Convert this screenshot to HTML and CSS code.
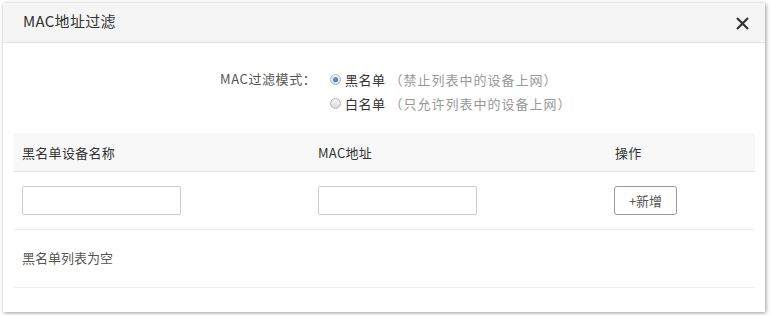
FILE: index.html
```html
<!DOCTYPE html>
<html>
<head>
  <meta charset="UTF-8" />
  <meta name="viewport" content="width=device-width, initial-scale=1.0" />
  <title>MAC地址过滤</title>
  <link rel="stylesheet" href="styles.css">
</head>
<body>
  <div class="dialog">
    <div class="dialog-head">
      <span class="dialog-title">MAC地址过滤</span>
      <span class="close">
        <svg width="13" height="13" viewBox="0 0 13 13">
          <path d="M1 1 L12 12 M12 1 L1 12" stroke="#333" stroke-width="2.2" fill="none"/>
        </svg>
      </span>
    </div>
    <div class="dialog-body">
      <div class="mode">
        <div class="mode-label">MAC过滤模式：</div>
        <div class="mode-options">
          <label class="radio-row"><span class="radio checked"></span>黑名单<span class="hint">（禁止列表中的设备上网）</span></label>
          <label class="radio-row"><span class="radio"></span>白名单<span class="hint">（只允许列表中的设备上网）</span></label>
        </div>
      </div>

      <table class="list">
        <colgroup>
          <col class="col-name">
          <col class="col-mac">
          <col>
        </colgroup>
        <thead>
          <tr>
            <th>黑名单设备名称</th>
            <th>MAC地址</th>
            <th>操作</th>
          </tr>
        </thead>
        <tbody>
          <tr class="add-row">
            <td><input type="text" class="field"></td>
            <td><input type="text" class="field"></td>
            <td><button class="btn-add">+新增</button></td>
          </tr>
          <tr class="empty-row">
            <td colspan="3"><span class="empty-text">黑名单列表为空</span></td>
          </tr>
        </tbody>
      </table>
    </div>
  </div>
</body>
</html>
```

FILE: styles.css
```css
body {
  margin: 0;
  padding: 3px;
  background-color: #fff;
  font-family: "Noto Sans CJK SC", "Liberation Sans", sans-serif;
  font-size: 13px;
  color: #333;
}

.dialog {
  width: 762px;
  height: 309px;
  background-color: #fff;
  box-shadow: 1px 1px 4px rgba(0, 0, 0, 0.4);
}

.dialog-head {
  display: flex;
  align-items: center;
  justify-content: space-between;
  height: 39px;
  padding: 0 16px 0 20px;
  background-color: #f5f5f5;
  border-bottom: 1px solid #e3e3e3;
}

.dialog-title {
  font-size: 15px;
  color: #333;
  line-height: 20px;
  margin-top: -4px;
  letter-spacing: 0.3px;
}

.close {
  display: flex;
  margin-top: 2px;
  cursor: pointer;
}

.dialog-body {
  padding: 0 10px 0 11px;
}

.mode {
  display: flex;
  padding-top: 24px;
  padding-left: 206px;
}

.mode-label {
  flex: none;
  width: 110px;
  line-height: 24px;
  color: #555;
  letter-spacing: 0.6px;
}

.radio-row {
  display: flex;
  align-items: center;
  height: 24px;
  color: #333;
  letter-spacing: 0.5px;
}

.hint {
  color: #999;
  margin-left: 4px;
  letter-spacing: 1px;
}

.radio {
  box-sizing: border-box;
  width: 11px;
  height: 11px;
  margin-right: 4px;
  border-radius: 50%;
  border: 1px solid #b5b5b5;
  background: linear-gradient(#f4f4f4, #dcdcdc);
  position: relative;
}

.radio.checked::after {
  content: "";
  position: absolute;
  left: 2px;
  top: 2px;
  width: 5px;
  height: 5px;
  border-radius: 50%;
  background: radial-gradient(circle at 40% 35%, #5aa7e8, #1a5fa8);
}

.list {
  width: 741px;
  margin-top: 18px;
  border-collapse: collapse;
  table-layout: fixed;
}

.col-name {
  width: 296px;
}

.col-mac {
  width: 297px;
}

.list th {
  height: 38px;
  padding: 0 8px;
  text-align: left;
  font-weight: normal;
  color: #333;
  background-color: #f8f8f8;
  border-bottom: 1px solid #e6e6e6;
  letter-spacing: 0.3px;
}

.list td {
  padding: 0 8px;
  border-bottom: 1px solid #eee;
}

.add-row td {
  height: 57px;
}

.empty-row td {
  height: 57px;
  color: #555;
}

.empty-text {
  display: block;
  margin-top: -3px;
}

.field {
  box-sizing: border-box;
  display: block;
  width: 159px;
  height: 29px;
  border: 1px solid #ccc;
  border-radius: 2px;
  outline: none;
}

.btn-add {
  box-sizing: border-box;
  display: block;
  width: 63px;
  height: 29px;
  margin-left: -1px;
  padding: 0;
  font-family: inherit;
  font-size: 13px;
  color: #555;
  background-color: #fff;
  border: 1px solid #999;
  border-radius: 3px;
  cursor: pointer;
}
```
